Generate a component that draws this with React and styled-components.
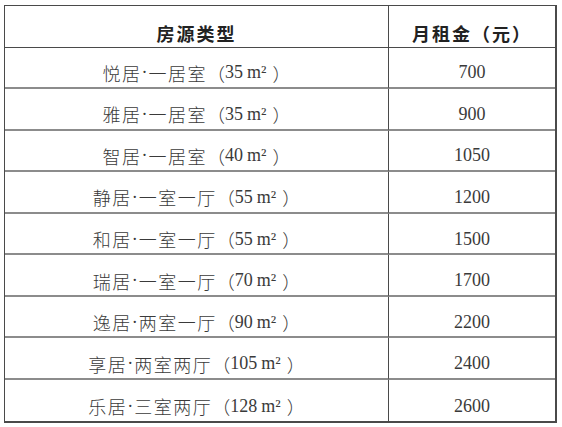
import React from "react";
import styled, { createGlobalStyle } from "styled-components";

const Global = createGlobalStyle`
  html, body { margin: 0; padding: 0; background: #fff; }
  body { font-family: "Liberation Serif", "Noto Sans CJK SC", serif; }
`;

const Page = styled.div`
  padding: 5px 0 0 4px;
  width: 562px;
  height: 427px;
  box-sizing: border-box;
`;

const Table = styled.div`
  width: 553px;
  box-sizing: border-box;
  border: 1px solid #4a4a4a;
  border-right-width: 2px;
  border-bottom-width: 2px;
  display: grid;
  grid-template-columns: 384px 1fr;
  grid-auto-rows: 41.55px;
`;

const Cell = styled.div`
  display: flex;
  align-items: center;
  justify-content: center;
  box-sizing: border-box;
  padding-top: ${(p) => (p.$head ? "14px" : "11px")};
  border-right: ${(p) => (p.$first ? "1px solid #4a4a4a" : "none")};
  border-bottom: ${(p) =>
    p.$last ? "none" : p.$head ? "1px solid #4a4a4a" : "2px solid #8c8c8c"};
  font-family: "Liberation Serif", "Noto Sans CJK SC", serif;
  font-size: 18px;
  font-weight: ${(p) => (p.$head ? 700 : 300)};
  letter-spacing: ${(p) => (p.$head ? "2px" : "0")};
  color: ${(p) => (p.$head ? "#222" : "#3a3a3a")};
  white-space: nowrap;
`;

const CJK = styled.span`
  font-family: "Noto Sans CJK SC", sans-serif;
  font-weight: ${(p) => (p.$bold ? 700 : 300)};
  letter-spacing: ${(p) => (p.$bold ? "2px" : "1.5px")};
`;

const Dot = styled.span`
  font-family: "Liberation Serif", serif;
  margin-right: 1px;
`;

const Paren = styled.span`
  font-family: "Noto Sans CJK SC", sans-serif;
  font-weight: 300;
`;

const Unit = styled.span`
  font-family: "Liberation Serif", serif;
  margin: 0 6px 0 4px;
`;

const rows = [
  ["悦居", "一居室", "35", "700"],
  ["雅居", "一居室", "35", "900"],
  ["智居", "一居室", "40", "1050"],
  ["静居", "一室一厅", "55", "1200"],
  ["和居", "一室一厅", "55", "1500"],
  ["瑞居", "一室一厅", "70", "1700"],
  ["逸居", "两室一厅", "90", "2200"],
  ["享居", "两室两厅", "105", "2400"],
  ["乐居", "三室两厅", "128", "2600"],
];

export default function App() {
  return (
    <Page>
      <Global />
      <Table>
        <Cell $head $first>
          <CJK $bold>房源类型</CJK>
        </Cell>
        <Cell $head>
          <CJK $bold>月租金（元）</CJK>
        </Cell>
        {rows.map(([name, kind, area, rent], i) => {
          const last = i === rows.length - 1;
          return (
            <React.Fragment key={name}>
              <Cell $first $last={last}>
                <CJK>{name}</CJK>
                <Dot>·</Dot>
                <CJK>{kind}</CJK>
                <Paren>（</Paren>
                {area}
                <Unit>m²</Unit>
                <Paren>）</Paren>
              </Cell>
              <Cell $last={last}>{rent}</Cell>
            </React.Fragment>
          );
        })}
      </Table>
    </Page>
  );
}
